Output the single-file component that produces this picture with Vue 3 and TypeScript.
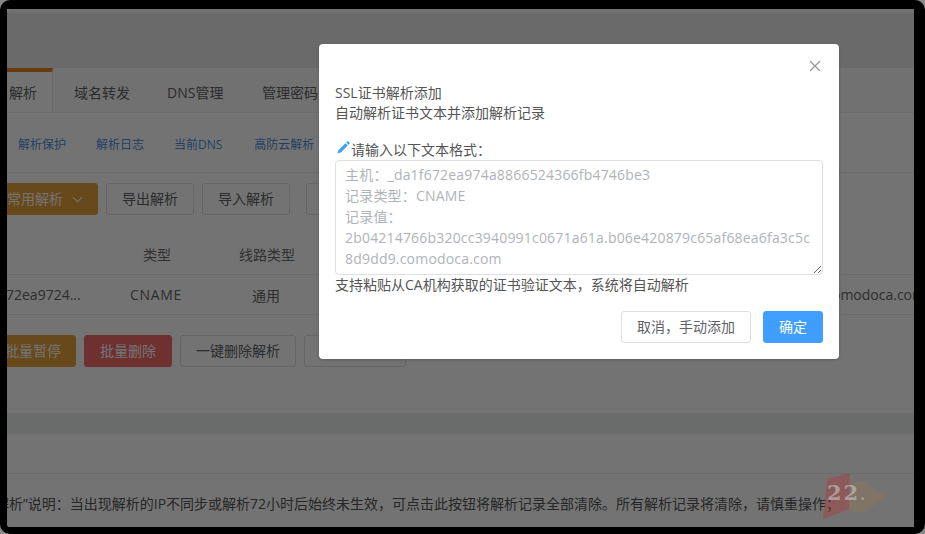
<script setup lang="ts">
const placeholder = '主机：_da1f672ea974a8866524366fb4746be3\n记录类型：CNAME\n记录值：\n2b04214766b320cc3940991c0671a61a.b06e420879c65af68ea6fa3c5c\n8d9dd9.comodoca.com'
const subLinks = ['解析保护', '解析日志', '当前DNS', '高防云解析']
const tabs = ['域名转发', 'DNS管理', '管理密码']
</script>

<template>
  <div class="screen">
    <div class="frame">
      <div class="page">
        <div class="top-strip"></div>
        <div class="head-band"></div>
        <div class="tabs">
          <div class="tab active">解析</div>
          <div v-for="t in tabs" :key="t" class="tab">{{ t }}</div>
        </div>
        <div class="subnav">
          <a v-for="l in subLinks" :key="l" class="sublink">{{ l }}</a>
        </div>
        <div class="actions first">
          <button class="btn orange w-common">常用解析 <span class="chev"></span></button>
          <button class="btn">导出解析</button>
          <button class="btn">导入解析</button>
          <button class="btn">解析设置</button>
        </div>
        <div class="thead">
          <span class="c1"></span><span class="c2">类型</span><span class="c3">线路类型</span>
        </div>
        <div class="trow">
          <span class="c1 val">72ea9724...</span><span class="c2 cname">CNAME</span><span class="c3">通用</span>
          <span class="c4">2b04214766b320cc.comodoca.com</span>
        </div>
        <div class="actions second">
          <button class="btn orange w-pause">批量暂停</button>
          <button class="btn red">批量删除</button>
          <button class="btn">一键删除解析</button>
          <button class="btn w-more">修改解析</button>
        </div>
        <div class="gap-band"></div>
        <div class="blank-row"></div>
        <div class="note">“一键删除解析”说明：当出现解析的IP不同步或解析72小时后始终未生效，可点击此按钮将解析记录全部清除。所有解析记录将清除，请慎重操作；</div>
        <div class="mask"></div>
        <div class="watermark">
          <svg width="66" height="52" viewBox="0 0 66 52">
            <polygon points="4,6 27,0 26,36 0,46" fill="#b03a3a" fill-opacity=".42" />
            <polygon points="27,10 42,8 63,24 40,40 26,38" fill="#b07a3c" fill-opacity=".22" />
          </svg>
          <span class="wm-text">22<small>.</small></span>
        </div>
      </div>
    </div>

    <div class="dialog" role="dialog">
      <button class="close" aria-label="close">
        <svg width="12" height="12" viewBox="0 0 12 12"><path d="M1 1 L11 11 M11 1 L1 11" stroke="#909399" stroke-width="1.1" fill="none" /></svg>
      </button>
      <div class="title">SSL证书解析添加</div>
      <div class="subtitle">自动解析证书文本并添加解析记录</div>
      <div class="label">
        <svg class="pen" width="13" height="13" viewBox="0 0 13 13"><path d="M0.5 12.5 L1.4 9.2 L8.4 2.2 L10.8 4.6 L3.8 11.6 Z M9.2 1.4 L10.1 0.5 C10.5 0.1 11 0.1 11.4 0.5 L12.5 1.6 C12.9 2 12.9 2.5 12.5 2.9 L11.6 3.8 Z" fill="#409eff" /></svg>
        <span>请输入以下文本格式：</span>
      </div>
      <textarea class="area" :placeholder="placeholder"></textarea>
      <div class="hint">支持粘贴从CA机构获取的证书验证文本，系统将自动解析</div>
      <div class="footer">
        <button class="dbtn">取消，手动添加</button>
        <button class="dbtn primary">确定</button>
      </div>
    </div>
  </div>
</template>

<style>
html, body { margin: 0; background: #8a8a8a; }
</style>

<style scoped>
.screen {
  position: relative;
  width: 925px;
  height: 534px;
  overflow: hidden;
  font-family: "Open Sans", "Noto Sans CJK SC", sans-serif;
  font-size: 14px;
}
.frame {
  box-sizing: border-box;
  width: 925px;
  height: 534px;
  border-style: solid;
  border-color: #000;
  border-width: 9px 11px 7px 7px;
  border-radius: 10px;
  overflow: hidden;
  background: #000;
}
.page {
  position: relative;
  height: 518px;
  overflow: hidden;
  background: #fff;
  color: #666;
}
.mask {
  position: absolute;
  inset: 0;
  background: rgba(0, 0, 0, .55);
}
.top-strip { height: 4px; background: #fafafa; }
.head-band { height: 55px; background: #ececed; }
.tabs {
  display: flex;
  height: 45px;
  border-bottom: 1px solid #eee;
  box-sizing: border-box;
  background: #fafafa;
}
.tab { line-height: 50px; padding: 0 0 0 21px; width: 56px; margin-right: 16px; color: #606266; white-space: nowrap; }
.tab:nth-child(3) { margin-right: 18px; }
.tab.active {
  box-sizing: border-box;
  width: 46px;
  padding: 0 0 0 2px;
  margin-right: 0;
  background: #fff;
  border-top: 4px solid #e6801a;
  border-right: 1px solid #eee;
  line-height: 42px;
}
.subnav {
  display: flex;
  gap: 30px;
  height: 60px;
  padding: 2px 0 0 11px;
  align-items: center;
  box-sizing: border-box;
  border-bottom: 1px solid #eee;
}
.sublink { font-size: 12px; color: #4a8fe0; }
.sublink:nth-child(3) { margin-right: 2px; }
.actions { display: flex; gap: 8px; }
.actions.first { padding-top: 10px; height: 57px; box-sizing: border-box; margin-left: -6px; }
.actions.second { padding-top: 20px; height: 99px; box-sizing: border-box; margin-left: -6px; border-bottom: 1px solid #eee; }
.btn {
  box-sizing: border-box;
  height: 32px;
  width: 88px;
  padding: 0 0 2px;
  border: 1px solid #dcdfe6;
  border-radius: 3px;
  background: #fff;
  color: #606266;
  font: inherit;
  white-space: nowrap;
}
.actions.first .btn:nth-child(4) { margin-left: 8px; }
.actions.second .btn:nth-child(3) { width: 116px; }
.orange { background: #e6a23c; border-color: #e6a23c; color: #fff; }
.red { background: #f56c6c; border-color: #f56c6c; color: #fff; }
.w-common { width: 97px; text-align: left; padding-left: 5px; }
.w-pause { width: 75px; text-align: right; padding-right: 14px; }
.w-more { width: 102px; }
.chev {
  display: inline-block;
  width: 6px;
  height: 6px;
  margin: 0 0 3px 7px;
  border-right: 1px solid #fff;
  border-bottom: 1px solid #fff;
  transform: rotate(45deg);
}
.thead, .trow { display: flex; align-items: center; text-align: center; border-bottom: 1px solid #eee; box-sizing: border-box; }
.thead { height: 45px; padding-top: 4px; color: #6e6e6e; }
.trow { height: 40px; white-space: nowrap; }
.c1 { width: 111px; flex: none; }
.c1.val { text-align: left; margin-left: -1px; width: 112px; }
.c2 { width: 78px; }
.c3 { width: 142px; }
.trow .c2 { width: 76px; }
.trow .c3 { width: 144px; }
.cname { letter-spacing: .7px; }
.c4 { margin-left: auto; white-space: nowrap; flex: none; margin-right: -11px; }
.gap-band { height: 19px; background: #eceded; border-bottom: 1px solid #f2f2f2; }
.blank-row { height: 39px; border-bottom: 1px solid #eee; }
.note {
  margin-left: -73px;
  line-height: 60px;
  white-space: nowrap;
  color: #555;
}
.watermark {
  position: absolute;
  left: 816px;
  top: 464px;
  width: 66px;
  height: 52px;
}
.watermark svg { display: block; }
.wm-text {
  position: absolute;
  left: 4px;
  top: 7px;
  font-family: "DejaVu Serif", serif;
  font-weight: 700;
  font-size: 21px;
  line-height: 26px;
  letter-spacing: 2px;
  color: rgba(190, 186, 182, .7);
}
.wm-text small { font-size: 14px; }

.dialog {
  position: absolute;
  left: 319px;
  top: 44px;
  box-sizing: border-box;
  width: 520px;
  height: 315px;
  padding: 39px 16px 16px;
  display: flex;
  flex-direction: column;
  background: #fff;
  border-radius: 4px;
  color: #555;
  box-shadow: 0 1px 3px rgba(0, 0, 0, .2);
}
.close {
  position: absolute;
  right: 18px;
  top: 16px;
  width: 12px;
  height: 12px;
  padding: 0;
  border: 0;
  background: none;
  display: block;
}
.close svg { display: block; }
.title, .subtitle { line-height: 20px; }
.label { display: flex; align-items: center; margin-top: 15px; margin-bottom: 1px; height: 21px; padding-left: 2px; }
.pen { margin-bottom: 3px; margin-right: 1px; flex: none; }
.area {
  box-sizing: border-box;
  display: block;
  width: 488px;
  height: 115px;
  padding: 3px 9px;
  margin: 0;
  border: 1px solid #dcdfe6;
  border-radius: 4px;
  font: inherit;
  letter-spacing: .19px;
  line-height: 21px;
  color: #606266;
  outline: none;
  overflow: hidden;
}
.area::placeholder { color: #b0b3b8; opacity: 1; }
.hint { line-height: 20px; }
.footer { display: flex; justify-content: flex-end; gap: 12px; margin-top: auto; }
.dbtn {
  box-sizing: border-box;
  height: 32px;
  width: 130px;
  padding: 0 0 2px;
  border: 1px solid #dcdfe6;
  border-radius: 3px;
  background: #fff;
  color: #606266;
  font: inherit;
}
.dbtn.primary { width: 60px; background: #409eff; border-color: #409eff; color: #fff; }
</style>
